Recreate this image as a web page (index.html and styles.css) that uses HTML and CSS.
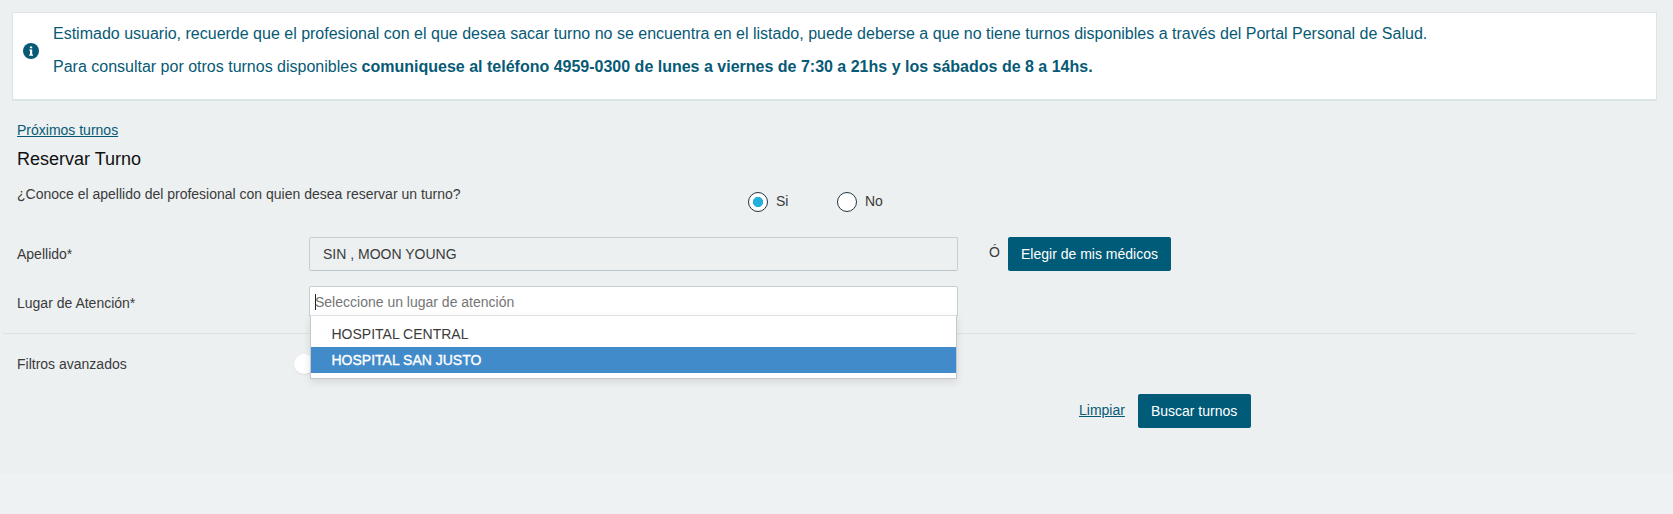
FILE: index.html
```html
<!DOCTYPE html>
<html lang="es">
<head>
<meta charset="utf-8">
<title>Reservar Turno</title>
<link rel="stylesheet" href="styles.css">
</head>
<body>
<main class="page">
  <section class="notice">
    <svg class="notice-icon" viewBox="0 0 16 16" aria-hidden="true">
      <circle cx="8" cy="8" r="8" fill="#075a75"/>
      <path fill="#fff" d="M6.9 3.4h2.3v1.9H6.9zM6.2 6.5h3v5.1h.8v1.1H6.2v-1.1h.8V7.6h-.8z"/>
    </svg>
    <div class="notice-text">
      <p>Estimado usuario, recuerde que el profesional con el que desea sacar turno no se encuentra en el listado, puede deberse a que no tiene turnos disponibles a través del Portal Personal de Salud.</p>
      <p>Para consultar por otros turnos disponibles <b>comuniquese al teléfono 4959-0300 de lunes a viernes de 7:30 a 21hs y los sábados de 8 a 14hs.</b></p>
    </div>
  </section>
  <a class="link upcoming">Próximos turnos</a>
  <h1 class="title">Reservar Turno</h1>
  <div class="row question">
    <span class="question-text">¿Conoce el apellido del profesional con quien desea reservar un turno?</span>
    <span class="radio"><i class="dot checked"></i>Si</span>
    <span class="radio"><i class="dot"></i>No</span>
  </div>
  <div class="row surname">
    <span class="label">Apellido*</span>
    <div class="input readonly">SIN , MOON YOUNG</div>
    <span class="or">Ó</span>
    <span class="button">Elegir de mis médicos</span>
  </div>
  <div class="row place">
    <span class="label">Lugar de Atención*</span>
    <div class="select">
      <div class="input search"><i class="caret"></i>Seleccione un lugar de atención</div>
      <div class="menu">
        <div class="option">HOSPITAL CENTRAL</div>
        <div class="option active">HOSPITAL SAN JUSTO</div>
      </div>
    </div>
  </div>
  <div class="divider"></div>
  <div class="row filters">
    <span class="label">Filtros avanzados</span>
    <i class="knob"></i>
  </div>
  <div class="row actions">
    <a class="link">Limpiar</a>
    <span class="button submit">Buscar turnos</span>
  </div>
</main>
</body>
</html>
```

FILE: styles.css
```css
* { box-sizing: border-box; }
body {
  margin: 0;
  height: 514px;
  overflow: hidden;
  background: #eef2f3;
  color: #3b3b3b;
  font: 14px/20px "Liberation Sans", Arial, sans-serif;
}
.page {
  height: 474px;
  padding-top: 12px;
  background: #ecf0f1;
}
.notice {
  display: flex;
  align-items: flex-start;
  width: 1645px;
  height: 89px;
  margin-left: 12px;
  padding: 11px 0 0 10px;
  background: #fff;
  border: 1px solid #dde4e6;
  border-bottom-width: 2px;
  color: #075a75;
}
.notice-icon { width: 16px; height: 16px; margin-top: 19px; }
.notice-text { margin-left: 14px; font-size: 16px; white-space: nowrap; }
.notice-text p { margin: 0 0 13px; }
.link { color: #075a75; text-decoration: underline; }
.upcoming { display: block; width: max-content; margin: 19px 0 0 17px; }
.title { margin: 9px 0 0 17px; font-size: 18px; font-weight: 400; color: #111; }
.row { display: flex; align-items: flex-start; margin-left: 17px; }
.question { margin-top: 15px; height: 53px; }
.question-text { width: 731px; }
.radio { display: flex; align-items: flex-start; width: 89px; height: 21px; margin-top: 7px; }
.dot {
  width: 20px;
  height: 20px;
  margin: 1px 8px 0 0;
  border: 1px solid #1f3540;
  border-radius: 50%;
  background: #fff;
}
.checked { background: radial-gradient(circle, #24b0dc 4.8px, #fff 5.4px); }
.label { width: 292px; }
.surname { height: 49px; }
.surname .label { margin-top: 7px; }
.input { width: 649px; border: 1px solid #c5ced2; border-radius: 2px; }
.readonly { height: 34px; padding: 6px 12px 6px 13px; border-bottom-color: #b9c7cc; }
.or { width: 19px; margin: 5px 0 0 31px; }
.button {
  height: 34px;
  padding: 7px 13px;
  border-radius: 2px;
  background: #005b78;
  color: #fff;
  white-space: nowrap;
}
.submit { padding-right: 14px; }
.place { height: 47px; }
.place .label { margin-top: 7px; }
.select { position: relative; }
.search {
  display: flex;
  height: 31px;
  padding: 5px;
  background: #fff;
  color: #757575;
}
.caret { width: 1px; height: 16px; margin: 2px -1px 0 0; background: #222; }
.menu {
  position: absolute;
  z-index: 2;
  top: 29px;
  left: 1px;
  width: 647px;
  height: 64px;
  padding: 5px 0;
  background: #fff;
  border: 1px solid #c4c8ca;
  border-top-color: #dde3e5;
  box-shadow: 0 3px 8px rgba(0, 0, 0, .1);
}
.option { height: 26px; padding: 3px 20.5px; }
.active { background: #428bca; color: #fff; -webkit-text-stroke: .35px #fff; }
.divider { width: 1633px; height: 1px; margin-left: 3px; background: #dce2e4; }
.filters { height: 60px; padding-top: 20px; }
.knob {
  width: 20px;
  height: 20px;
  margin-left: -15px;
  border-radius: 50%;
  background: #fff;
  box-shadow: 0 1px 2px rgba(0, 0, 0, .08);
}
.actions { gap: 13px; margin-left: 1079px; }
.actions .link { margin-top: 6px; }
```
